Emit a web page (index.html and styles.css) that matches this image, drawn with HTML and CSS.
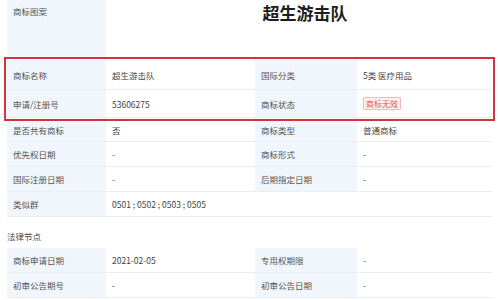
FILE: index.html
```html
<!DOCTYPE html>
<html lang="zh">
<head>
<meta charset="utf-8">
<link rel="stylesheet" href="styles.css">
</head>
<body>
<div class="page">
  <div class="grid">
    <div class="lab lab-top img-row">商标图案</div>
    <div class="val span3 img-row"><span class="mark">超生游击队</span></div>
  </div>
  <div class="highlight">
    <div class="grid">
      <div class="lab r1">商标名称</div>
      <div class="val r1">超生游击队</div>
      <div class="lab r1">国际分类</div>
      <div class="val r1">5类 医疗用品</div>
      <div class="lab r2">申请/注册号</div>
      <div class="val r2">53606275</div>
      <div class="lab r2">商标状态</div>
      <div class="val r2"><span class="badge">商标无效</span></div>
    </div>
  </div>
  <div class="grid">
    <div class="lab r3">是否共有商标</div>
    <div class="val r3">否</div>
    <div class="lab r3">商标类型</div>
    <div class="val r3">普通商标</div>
    <div class="lab r4">优先权日期</div>
    <div class="val r4">-</div>
    <div class="lab r4">商标形式</div>
    <div class="val r4">-</div>
    <div class="lab r4">国际注册日期</div>
    <div class="val r4">-</div>
    <div class="lab r4">后期指定日期</div>
    <div class="val r4">-</div>
    <div class="lab r4">类似群</div>
    <div class="val r4 span3">0501 ; 0502 ; 0503 ; 0505</div>
  </div>
  <div class="section">法律节点</div>
  <div class="grid">
    <div class="lab r4">商标申请日期</div>
    <div class="val r4">2021-02-05</div>
    <div class="lab r4">专用权期限</div>
    <div class="val r4">-</div>
    <div class="lab r4">初审公告期号</div>
    <div class="val r4">-</div>
    <div class="lab r4">初审公告日期</div>
    <div class="val r4">-</div>
  </div>
</div>
</body>
</html>
```

FILE: styles.css
```css
html, body {
  margin: 0;
  padding: 0;
  background: #ffffff;
}
body {
  width: 500px;
  height: 300px;
  overflow: hidden;
  font-family: "Noto Sans CJK SC", "Noto Sans", sans-serif;
  font-size: 8.5px;
  color: #4a4a4a;
}
.page {
  padding-left: 7px;
  width: 485px;
}
.grid {
  display: grid;
  grid-template-columns: 99px 149px 102px 135px;
}
.lab, .val {
  display: flex;
  align-items: center;
  border-bottom: 1px solid #e9eef3;
  box-sizing: border-box;
}
.lab {
  background: #f0f6fb;
  padding-left: 6px;
  color: #555;
}
.val {
  background: #fff;
  padding-left: 6px;
  color: #444;
}
.span3 {
  grid-column: span 3;
}
.img-row {
  height: 59px;
}
.lab-top {
  align-items: flex-start;
  padding-top: 5px;
}
.img-row.val {
  align-items: flex-start;
  justify-content: center;
  padding-left: 12px;
  padding-top: 0;
  border-bottom: none;
}
.mark {
  font-size: 17px;
  font-weight: 700;
  color: #1e1e1e;
  line-height: normal;
}
.highlight {
  outline: 2px solid #d0343c;
  outline-offset: 1px;
  margin-top: 1px;
}
.r1 { height: 30px; padding-top: 1px; }
.r2 { height: 28px; }
.r3 { height: 24px; }
.r4 { height: 25px; }
.badge {
  color: #e5555c;
  background: #fdf0f0;
  border: 1px solid #f3b8bb;
  font-size: 8px;
  line-height: 9px;
  padding: 1px 2px;
  border-radius: 1px;
}
.section {
  height: 31px;
  display: flex;
  align-items: center;
  padding-top: 6px;
  box-sizing: border-box;
  color: #444;
}
```
